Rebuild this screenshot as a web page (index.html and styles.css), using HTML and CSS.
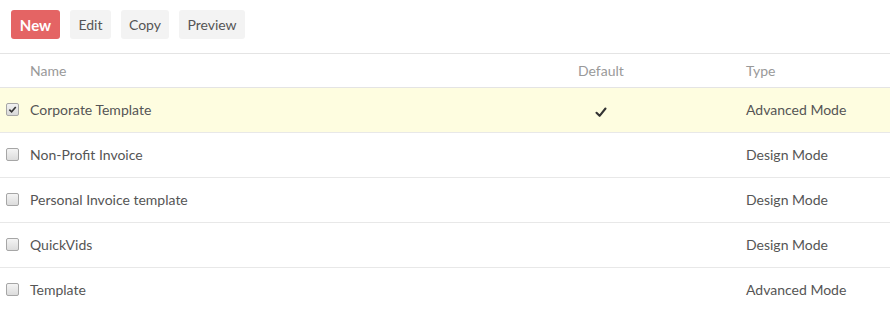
FILE: index.html
```html
<!DOCTYPE html>
<html>
<head>
<meta charset="utf-8">
<link rel="stylesheet" href="styles.css">
</head>
<body>
<div class="toolbar">
  <button class="btn btn-new">New</button>
  <button class="btn btn-edit">Edit</button>
  <button class="btn btn-copy">Copy</button>
  <button class="btn btn-preview">Preview</button>
</div>
<div class="table">
  <div class="row head">
    <div class="cell cb"></div>
    <div class="cell">Name</div>
    <div class="cell">Default</div>
    <div class="cell">Type</div>
  </div>
  <div class="row selected">
    <div class="cell cb"><span class="box checked"><svg viewBox="0 0 10 10" width="9" height="9"><path d="M1.5 5.2 L4 7.6 L8.6 2.2" fill="none" stroke="#333" stroke-width="1.8"/></svg></span></div>
    <div class="cell">Corporate Template</div>
    <div class="cell def"><svg class="tick" viewBox="0 0 12 12" width="12" height="12"><path d="M1.5 6.8 L4.6 9.8 L10.5 2.5" fill="none" stroke="#333" stroke-width="2.1" stroke-linecap="round" stroke-linejoin="round"/></svg></div>
    <div class="cell">Advanced Mode</div>
  </div>
  <div class="row">
    <div class="cell cb"><span class="box"></span></div>
    <div class="cell">Non-Profit Invoice</div>
    <div class="cell def"></div>
    <div class="cell">Design Mode</div>
  </div>
  <div class="row">
    <div class="cell cb"><span class="box"></span></div>
    <div class="cell">Personal Invoice template</div>
    <div class="cell def"></div>
    <div class="cell">Design Mode</div>
  </div>
  <div class="row">
    <div class="cell cb"><span class="box"></span></div>
    <div class="cell">QuickVids</div>
    <div class="cell def"></div>
    <div class="cell">Design Mode</div>
  </div>
  <div class="row last">
    <div class="cell cb"><span class="box"></span></div>
    <div class="cell">Template</div>
    <div class="cell def"></div>
    <div class="cell">Advanced Mode</div>
  </div>
</div>
</body>
</html>
```
FILE: styles.css
```css
html, body {
  margin: 0;
  padding: 0;
  background: #fff;
  font-family: Lato, "Open Sans", sans-serif;
  color: #555;
}
.toolbar {
  display: flex;
  gap: 10px;
  padding: 10px 11px 14px;
  border-bottom: 1px solid #e4e4e4;
}
.btn {
  height: 29px;
  border: none;
  border-radius: 3px;
  background: #f3f3f3;
  color: #555;
  font-family: Lato, sans-serif;
  font-size: 14px;
  padding: 0;
  text-align: center;
  cursor: pointer;
}
.btn-new {
  width: 49px;
  background: #e46464;
  color: #fff;
  font-weight: bold;
  font-size: 15px;
}
.btn-edit { width: 41px; }
.btn-copy { width: 48px; }
.btn-preview { width: 66px; }
.row {
  display: grid;
  grid-template-columns: 30px 548px 168px 1fr;
  align-items: center;
  height: 44px;
  border-bottom: 1px solid #e8e8e8;
  font-size: 14px;
  line-height: 16px;
}
.row > .cell {
  padding-bottom: 1px;
}
.row.head {
  height: 33px;
  color: #999;
  font-size: 14px;
  border-bottom: 1px solid #e4e4e4;
}
.row.head > .cell {
  padding-bottom: 0;
  padding-top: 1px;
}
.row.selected {
  background: #fefde0;
}
.row.last {
  border-bottom: none;
}
.cb {
  display: flex;
  align-items: center;
  padding-left: 6px;
}
.box {
  width: 11px;
  height: 11px;
  border: 1px solid #a6a6a6;
  border-radius: 2px;
  background: linear-gradient(#f4f4f4, #dcdcdc);
  display: flex;
  align-items: center;
  justify-content: center;
}
.box.checked {
  background: linear-gradient(#f2f2f2, #d8d8d8);
}
.def {
  display: flex;
  align-items: center;
}
.tick {
  margin-left: 17px;
  margin-top: 4px;
}
```
